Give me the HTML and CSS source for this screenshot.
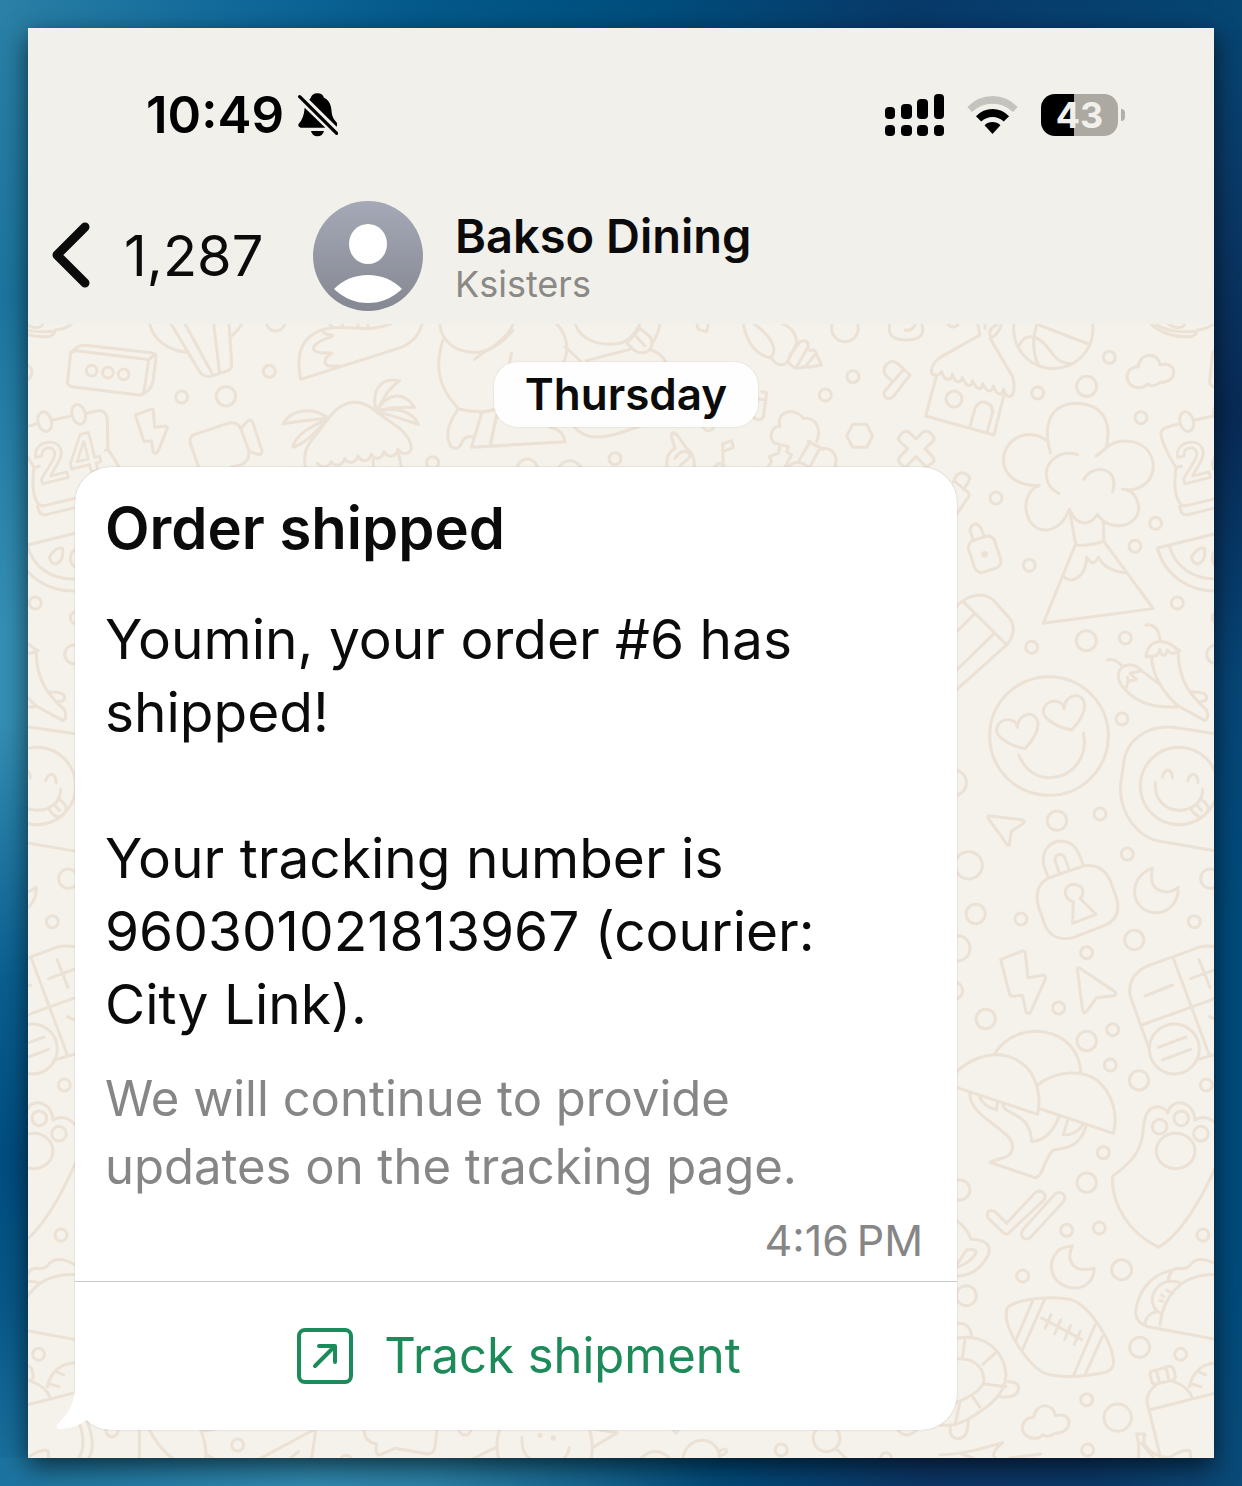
FILE: index.html
```html
<!DOCTYPE html>
<html lang="en">
<head>
  <meta charset="UTF-8">
  <meta name="viewport" content="width=device-width, initial-scale=1.0">
  <title>Bakso Dining</title>
  <link rel="stylesheet" href="styles.css">
</head>
<body>
  <div class="phone">
    <header class="header">
      <div class="status-bar">
        <div class="status-left">
          <span class="clock">10:49</span>
          <svg class="bell" viewBox="0 0 120 132" aria-hidden="true">
            <path d="M38 15Q42 1 58 1Q74 1 78 14C95 22 100 38 101 58Q102 75 117 90Q118 98 116 101L34 20Z"/>
            <path d="M20 44L82 104H8Q0 102 1 94Q18 76 20 44Z"/>
            <path d="M39 114H78Q74 130 58 130Q43 130 39 114Z"/>
            <path d="M5 11L116 121" fill="none" stroke="#000" stroke-width="10" stroke-linecap="round"/>
          </svg>
        </div>
        <div class="status-right">
          <svg class="signal" viewBox="0 0 59 42" aria-hidden="true">
            <rect x="0" y="13" width="10" height="12" rx="4"/>
            <rect x="16" y="10" width="11" height="15" rx="4"/>
            <rect x="32" y="5" width="11" height="20" rx="4"/>
            <rect x="49" y="0" width="10" height="25" rx="4"/>
            <rect x="0" y="31" width="10" height="11" rx="4"/>
            <rect x="16" y="31" width="11" height="11" rx="4"/>
            <rect x="32" y="31" width="11" height="11" rx="4"/>
            <rect x="49" y="31" width="10" height="11" rx="4"/>
          </svg>
          <svg class="wifi" viewBox="0 0 154 114" aria-hidden="true">
            <path d="M1 33Q34 0 77 0T153 33L139 48Q112 23 77 23T15 48Z" fill="#c5c3be"/>
            <path d="M27 61Q48 39 77 39T127 61L111 77Q96 63 77 63T43 77Z"/>
            <path d="M53 88Q63 78 77 78T101 88L77 114Z"/>
          </svg>
          <div class="battery"><span class="battery-level">43</span></div>
        </div>
      </div>
      <div class="nav">
        <button class="back" type="button" aria-label="Back">
          <svg class="chevron" viewBox="0 0 38 64" aria-hidden="true"><path d="M33 3L5 31L33 59"/></svg>
          <span class="unread">1,287</span>
        </button>
        <svg class="avatar" viewBox="0 0 110 110" aria-hidden="true">
          <defs>
            <linearGradient id="avatar-fill" x1="0" y1="0" x2="0" y2="1">
              <stop offset="0" stop-color="#a5a9b7"/>
              <stop offset="1" stop-color="#858892"/>
            </linearGradient>
          </defs>
          <circle cx="55" cy="55" r="55" fill="url(#avatar-fill)"/>
          <ellipse cx="55" cy="43" rx="19" ry="20" fill="#fff"/>
          <path d="M21 88Q35 74 55 74T89 88Q74 102 55 102T21 88Z" fill="#fff"/>
        </svg>
        <div class="contact">
          <h1 class="contact-name">Bakso Dining</h1>
          <p class="contact-sub">Ksisters</p>
        </div>
      </div>
    </header>

    <main class="chat">
      <svg class="wallpaper" viewBox="28 324 1186 1134" preserveAspectRatio="xMidYMid slice" aria-hidden="true">
        <defs>
          <g id="doodles">
            <!-- calendar, camera, huts -->
            <g transform="translate(28 320) scale(.3333)">
              <path d="M145 92L355 118Q362 120 361 128L348 212Q345 226 332 225L132 200Q118 197 119 185L127 105Q130 92 145 92Z"/>
              <path d="M128 97L150 80Q160 74 172 76L370 98Q384 100 384 112L375 185Q372 200 362 210L340 225M361 120L382 102"/>
              <circle cx="191" cy="152" r="16"/><circle cx="240" cy="158" r="16"/><circle cx="287" cy="163" r="16"/>
              <path d="M365 10C375 60 420 90 475 97M428 10L515 155Q525 170 545 170L600 152Q612 147 611 130L603 10M470 10L552 160M557 10L575 160M610 48Q625 38 642 12"/>
              <circle cx="461" cy="231" r="18"/><circle cx="594" cy="229" r="29"/><circle cx="724" cy="154" r="18"/><circle cx="743" cy="5" r="28"/>
              <path d="M818 178C800 90 830 40 900 25C980 15 1000 40 1088 12M818 178L1120 82C1160 65 1175 40 1182 12M885 35C895 50 920 40 912 50C880 60 850 75 858 90C870 105 900 95 912 100C890 110 885 130 900 138L935 138M912 20L905 12M945 22L942 12M990 24V12M1020 22V12"/>
              <path d="M178 280L210 272Q235 270 238 300L240 388L272 438M75 300L128 288M26 312L-5 320Q-30 328 -27 345C-20 385 0 410 18 443L34 439M18 443C10 500 15 530 30 550Q38 560 50 557L140 535M28 560L35 578Q42 586 55 584L140 563M232 391L240 388"/>
              <ellipse cx="50" cy="305" rx="20" ry="30" transform="rotate(-15 50 305)"/>
              <ellipse cx="152" cy="283" rx="20" ry="30" transform="rotate(-15 152 283)"/>
              <text class="doodle-text" x="34" y="494" transform="rotate(-14 34 494)">24</text>
              <path d="M322 285L372 267Q376 266 376 272L380 322L412 318Q422 320 416 330L390 395Q382 406 376 396L370 362L348 365Z"/>
              <path d="M512 442L487 370Q482 350 500 343L600 310Q630 303 640 330L662 390Q668 420 640 434L610 442M642 322L660 302Q670 296 675 310L702 392Q703 406 690 403L668 395"/>
              <path d="M832 442C825 390 840 375 860 350L905 290C950 235 1000 235 1045 275L1115 325C1140 345 1150 370 1150 385C1145 405 1120 405 1110 388C1105 412 1080 415 1068 395C1062 418 1040 422 1030 402C1025 425 1000 430 990 408C985 430 960 434 950 415C945 436 922 442 910 425C900 445 880 445 868 430M1035 420L1037 440M1110 390L1120 440"/>
              <path d="M900 295C860 260 790 265 765 312C800 305 850 300 900 295C850 320 800 345 795 382C840 365 870 330 900 295M1045 275C1030 220 1050 170 1115 182C1080 205 1065 240 1045 275C1080 215 1130 215 1160 262C1120 262 1080 262 1045 275C1100 260 1150 270 1172 313C1130 300 1090 285 1045 275"/>
              <path d="M1235 10C1240 70 1290 100 1350 97C1400 90 1430 60 1455 30M1340 118L1370 95M1245 60C1220 140 1230 200 1290 265C1330 280 1390 275 1420 265M1290 268C1260 310 1250 350 1270 380C1290 395 1300 375 1305 360Q1318 345 1338 352M1362 278L1330 382L1440 376M1405 285L1388 375"/>
              <circle cx="1214" cy="428" r="18"/>
            </g>
            <!-- shell, hand, notes, popcorn -->
            <g transform="translate(480 320) scale(.3333)">
              <path d="M0 102C50 80 90 40 100 10M228 10C260 40 270 90 250 128M255 80L300 122M285 10C300 60 360 80 420 70C440 65 470 40 480 10M540 10C535 40 525 60 515 70M440 70L480 25L510 50Q525 75 505 92Q485 105 465 92ZM465 45L495 78M320 122L450 88M515 90C540 100 550 110 558 128M95 100L88 128M0 280L40 268M50 290L30 375M0 380L255 365Q250 330 210 322M280 318C320 365 370 360 480 318"/>
              <path d="M845 215L860 218L850 290M820 235L858 240M820 290C830 305 850 300 852 285M650 10L655 28L680 35L685 12"/>
              <circle cx="685" cy="315" r="17"/><circle cx="405" cy="416" r="18"/><circle cx="142" cy="447" r="30"/><circle cx="270" cy="458" r="36"/><circle cx="1119" cy="170" r="18"/><circle cx="1036" cy="225" r="18"/><circle cx="1095" cy="25" r="40"/>
              <path d="M790 10C800 70 830 105 870 113C890 100 890 60 820 10M875 115C890 140 915 140 925 120L950 70C950 40 930 20 905 10M925 125C940 150 965 145 970 140M930 105L960 65Q985 55 985 80L950 140M990 92Q1005 85 1008 100L975 142M1008 100L1025 135L985 142"/>
              <path d="M620 385L595 350Q585 335 575 340Q570 342 585 385C560 400 558 420 562 445M620 385C640 400 645 420 643 445M585 415Q600 390 620 395Q640 405 620 420Q600 435 600 440M730 440L728 372L755 362L760 382L728 395M705 440Q715 425 732 435"/>
              <path d="M885 370C860 350 880 315 900 320C885 280 940 255 970 295C1010 290 1025 330 1010 365M885 370L925 380L920 395L935 405L915 440M900 378L895 400L868 410L875 425L865 440M990 365L958 420M1020 385L990 440M1030 385C1060 385 1075 410 1065 440M985 365L1030 388M925 440Q950 415 985 440"/>
            </g>
            <!-- volcano, cloud, locks -->
            <g transform="translate(840 320) scale(.3333)">
              <circle cx="593" cy="219" r="18"/><circle cx="740" cy="199" r="30"/><circle cx="808" cy="112" r="18"/><circle cx="903" cy="293" r="18"/><circle cx="468" cy="534" r="18"/><circle cx="568" cy="736" r="18"/><circle cx="947" cy="610" r="18"/><circle cx="885" cy="679" r="18"/><circle cx="1012" cy="849" r="18"/><circle cx="739" cy="962" r="30"/><circle cx="575" cy="982" r="18"/><circle cx="856" cy="954" r="18"/><circle cx="1128" cy="1003" r="28"/><circle cx="342" cy="237" r="24"/><circle cx="339" cy="3" r="18"/><circle cx="1135" cy="893" r="18"/>
              <path d="M932 10C960 42 1010 52 1050 50C1065 48 1070 40 1072 30C1095 28 1110 22 1122 10M950 14C980 35 1030 38 1062 34M985 10C1000 28 1030 25 1035 12"/>
              <path d="M150 10C140 45 160 60 200 60C245 60 255 40 245 10M195 30Q215 35 225 15"/>
              <path d="M210 165L160 230Q145 242 135 230Q128 220 137 210L190 150M155 182L135 163Q125 140 150 125Q165 122 178 135L210 165"/>
              <path d="M413 10L420 45L300 112Q270 135 275 160Q290 175 305 155Q312 180 325 178Q335 178 337 162Q345 188 357 185Q365 185 367 172Q378 200 390 196Q397 194 397 182Q410 208 420 206Q428 203 428 190Q440 215 450 213Q458 210 460 198Q470 225 482 222Q490 218 490 208Q500 235 515 228Q528 210 518 170L450 55Q475 45 485 12M290 165L257 288L462 345L492 225M390 320L405 265Q425 230 455 260L458 275L442 335M435 12V25M450 45Q445 25 470 15"/>
              <circle cx="640" cy="27" r="119"/>
              <path d="M590 12L745 72M590 14Q570 80 595 135M538 75Q560 35 600 60C640 90 640 130 690 130"/>
              <path id="doodle-cloud" d="M895 203C850 200 850 140 895 140C900 95 955 95 960 135C1015 120 1015 190 960 187C945 200 930 198 922 192C915 200 905 204 895 203Z"/>
              <path d="M38 313L80 313L98 348L80 382L38 382L20 348Z"/>
              <path d="M228 357L250 335Q260 330 270 338L280 348Q286 357 278 365L255 386L278 410Q286 420 278 428L262 438M228 357L205 335Q195 330 186 340L178 350Q172 358 180 365L203 386L180 410Q172 420 180 430L190 438M228 410L200 438M228 410L256 438"/>
              <path d="M632 400C610 330 620 250 712 250C800 255 815 320 798 385L768 408M798 385C830 350 930 350 940 435C940 500 880 515 848 508C890 510 905 560 890 590C860 630 800 625 772 583C750 620 710 620 688 568C660 640 600 645 570 605C545 560 560 510 598 496C540 500 490 470 490 418C495 350 570 320 625 365M713 404C660 385 600 430 625 490Q635 510 657 520M732 478C760 430 840 440 818 515"/>
              <path d="M688 568L707 672L610 910L940 866L792 665L790 605M707 674Q750 680 792 663M668 765C690 800 740 770 740 710Q758 745 775 712C790 740 820 755 855 758"/>
              <path d="M340 485L350 465Q370 450 388 470Q392 480 370 508M345 485L382 515Q390 522 385 532L345 590"/>
              <rect x="393" y="653" width="82" height="100" rx="22" transform="rotate(-18 434 703)"/>
              <path d="M400 660L390 632Q392 612 410 612Q422 615 432 648"/>
              <circle class="dot" cx="434" cy="703" r="10"/>
              <path d="M340 870C380 820 430 815 460 840L505 890C530 920 520 950 500 975L340 1118M370 845L500 975M340 945L403 882M340 1060L463 940"/>
              <path d="M1132 640L952 684C975 770 1050 815 1132 813M988 678C1005 740 1060 780 1132 777M1055 710Q1075 680 1093 685Q1100 720 1075 732Q1055 730 1055 710Z"/>
              <ellipse cx="1135" cy="715" rx="18" ry="26"/>
            </g>
            <!-- smileys, padlock, moon -->
            <g transform="translate(940 640) scale(.3333)">
              <circle cx="327" cy="288" r="178"/><circle cx="717" cy="438" r="116"/><circle cx="351" cy="542" r="29"/><circle cx="480" cy="522" r="18"/><circle cx="546" cy="237" r="18"/><circle cx="562" cy="642" r="18"/><circle cx="86" cy="676" r="41"/><circle cx="107" cy="822" r="29"/><circle cx="243" cy="837" r="18"/><circle cx="583" cy="900" r="29"/><circle cx="763" cy="845" r="18"/><circle cx="811" cy="716" r="29"/><circle cx="40" cy="428" r="39"/><circle cx="440" cy="938" r="18"/><circle cx="52" cy="925" r="38"/>
              <path d="M255 326C200 315 160 285 172 260C185 230 230 235 232 262C235 215 290 210 294 250C295 280 275 305 255 326Z"/>
              <path d="M395 270C340 259 300 229 312 204C325 174 370 179 372 206C375 159 430 154 434 194C435 224 415 249 395 270Z"/>
              <path d="M236 345C260 400 300 413 330 413C400 410 445 350 430 280"/>
              <path d="M667 412Q672 390 685 390Q697 395 697 414M743 422Q750 403 762 403Q775 408 774 428M646 427C640 540 790 530 788 448M752 505Q765 530 785 532Q805 520 805 500Q795 485 780 475M768 492L785 512"/>
              <path d="M840 283L700 262C610 255 555 310 550 375L541 440C540 530 600 590 650 602L840 635"/>
              <path d="M145 527L250 540Q255 545 250 550L214 574L208 615Q204 618 200 612L143 533Z"/>
              <path d="M325 714L310 672C305 620 340 603 365 603C395 605 410 625 416 640L430 676M358 700L345 660Q345 643 362 643Q372 645 376 657L388 692M325 714L430 678C480 670 500 700 510 720L530 775C545 830 510 850 490 858L400 893C350 905 325 880 315 855L297 805C280 750 305 725 325 714ZM400 785C370 780 365 735 402 733C440 738 430 770 420 775L468 823L398 850Z"/>
              <path d="M637 685C640 690 615 750 680 756Q700 755 714 742C718 780 690 820 645 818C570 815 560 710 637 685Z"/>
              <path d="M503 60Q525 52 548 80C535 90 525 120 555 148Q570 120 562 112M548 80Q580 65 605 92L570 100L590 118L562 125M555 148C590 190 650 205 710 200M605 92L655 130M618 50C620 20 640 3 665 5C695 5 700 25 720 32L700 40Q690 42 682 30Q678 50 668 45Q660 40 660 28Q655 50 635 48ZM635 50C635 110 680 170 715 198L795 242Q808 235 800 210C775 185 715 140 715 40M752 155Q800 155 800 172Q800 185 780 185M618 -45Q655 -50 660 0"/>
            </g>
            <!-- bolt, mushrooms, calculator -->
            <g transform="translate(940 930) scale(.3333)">
              <circle cx="356" cy="234" r="18"/><circle cx="518" cy="299" r="18"/><circle cx="440" cy="333" r="29"/><circle cx="511" cy="405" r="18"/><circle cx="137" cy="267" r="29"/><circle cx="597" cy="451" r="29"/><circle cx="799" cy="465" r="18"/><circle cx="490" cy="668" r="18"/><circle cx="440" cy="758" r="29"/><circle cx="60" cy="780" r="30"/><circle cx="703" cy="357" r="75"/><circle cx="659" cy="590" r="22"/><circle cx="724" cy="565" r="22"/><circle cx="783" cy="611" r="22"/><circle cx="42" cy="182" r="26"/>
              <ellipse cx="707" cy="663" rx="58" ry="53"/>
              <path d="M182 88L248 63Q255 62 256 70L264 143L310 135Q318 137 316 147L272 246Q264 256 258 246L247 196L218 199Q210 198 208 190Z"/>
              <path d="M412 118Q412 110 422 116L525 185Q530 195 520 197L470 203L438 246Q430 252 428 240Z"/>
              <path d="M832 50C790 45 780 50 760 58L625 107C580 125 560 165 573 205L628 357M605 285L832 203M700 85L808 375M768 390L832 372M615 198L698 165M752 146L832 117M777 88L810 172M808 260L832 270M655 352L738 321M667 390L752 358"/>
              <path d="M163 373C230 260 420 290 422 430M40 435C100 370 190 355 245 400C290 430 305 500 293 553L40 469M293 465C350 420 430 420 470 450C520 490 535 560 520 610L302 537M90 490C85 560 220 600 218 650C215 690 180 680 150 697L285 743C310 740 310 690 340 660C380 655 420 650 438 590M118 500Q130 530 170 540L172 518M188 520C190 560 270 540 275 635Q330 630 357 560M383 570L370 615Q410 615 430 582"/>
              <path d="M832 700C770 840 710 920 656 952C570 910 515 830 517 740C570 700 600 670 608 615C612 550 625 530 655 530Q680 535 683 550C690 520 715 515 730 520Q762 530 765 570C790 555 815 565 832 585"/>
            </g>
            <!-- football, taco, bottle, turtle -->
            <g transform="translate(940 1180) scale(.3333)">
              <circle cx="380" cy="151" r="18"/><circle cx="478" cy="144" r="18"/><circle cx="248" cy="288" r="18"/><circle cx="545" cy="269" r="30"/><circle cx="599" cy="502" r="30"/><circle cx="722" cy="523" r="18"/><circle cx="440" cy="659" r="18"/><circle cx="533" cy="713" r="41"/><circle cx="443" cy="810" r="18"/><circle cx="789" cy="165" r="18"/><circle cx="79" cy="347" r="30"/>
              <path d="M200 130L285 38Q300 28 312 40Q320 50 310 62L205 160Q198 166 190 158L145 115Q138 100 148 93Q160 88 168 98ZM345 42Q360 32 372 44Q378 55 370 65L272 172Q260 182 248 172Q240 160 250 148Z"/>
              <path d="M397 198C340 200 325 250 340 285C365 340 460 340 463 265Q400 280 390 235Q388 215 397 198Z"/>
              <path d="M205 380C250 350 350 350 390 358C450 375 520 490 521 550Q520 572 490 578C430 592 350 595 310 578C260 550 195 450 199 400Q200 385 205 380ZM280 358L228 480M315 356L246 512M465 435L400 588M487 470L435 585M305 414L425 478M333 404L315 445M362 420L344 462M392 437L374 478M421 453L403 493"/>
              <path d="M40 115Q80 140 93 178Q160 180 145 225C120 270 90 290 40 288M45 262L80 210Q110 205 108 220Q90 250 50 262"/>
              <path d="M832 255Q780 225 755 250Q740 270 715 265Q690 265 685 300M690 272C620 290 590 350 587 400Q590 430 625 440L832 479M660 435C670 350 720 280 832 284M720 308C660 290 630 340 638 370Q645 395 665 400M615 430Q620 400 650 395M665 345L672 350M680 330L688 335M660 362L668 364"/>
              <path d="M632 575L690 558Q700 560 702 570L706 590Q705 600 695 602L645 613Q635 610 634 600L630 585ZM650 572L658 608M678 565L688 602M648 615C620 640 615 660 627 690L662 834M700 604Q745 620 756 652M627 690L832 638M748 620C760 570 790 550 832 548M775 575L797 585M755 612L783 620M590 762L615 762C600 800 640 832 690 832M590 762Q600 800 595 834M605 790Q625 815 640 832M690 832Q730 805 750 812L752 834"/>
              <path d="M75 478L67 535M40 477C130 455 190 510 198 580C200 640 150 680 80 720Q40 740 0 735M165 520L128 553M132 612L198 620M95 645L120 682M60 665L45 735M40 538C100 530 130 560 132 600C130 630 90 650 40 672M40 432Q90 420 95 470M205 605Q240 605 235 630Q230 655 180 650M85 722L82 750Q75 778 50 776Q25 770 32 738M0 825C80 820 110 810 188 788Q150 820 165 834M65 822L100 834M210 834L302 822"/>
              <use href="#doodle-cloud" x="-614" y="572"/>
            </g>
          </g>
        </defs>
        <use href="#doodles"/>
        <use href="#doodles" x="-1142"/>
        <use href="#doodles" x="1142"/>
        <!-- strip under the message -->
        <g transform="translate(0 1220) scale(.3333)">
          <path d="M418 620V716M445 625Q480 690 520 716M600 625Q620 670 618 716M607 634L660 625M940 630L780 716M940 630Q948 632 946 640L935 716M640 716L620 705M870 716L895 695M1093 625Q1090 665 1130 672L1128 690Q1130 708 1142 704L1185 685L1285 702Q1302 700 1305 680L1312 625M240 615Q260 680 235 716M262 605Q290 680 265 716"/>
          <circle cx="336" cy="632" r="18"/><circle cx="713" cy="675" r="18"/><circle cx="1038" cy="722" r="16"/><circle cx="1395" cy="627" r="18"/><circle cx="2344" cy="690" r="18"/><circle cx="2480" cy="655" r="40"/><circle cx="2658" cy="714" r="16"/>
          <path d="M1420 716L1488 682M1500 625Q1484 670 1496 716M1566 652Q1564 700 1590 716M1708 682Q1706 704 1690 716M1768 625Q1782 670 1774 716M1780 682L1852 638L1766 625M1922 716Q1966 672 2010 716M2048 716C2060 642 2155 642 2160 716M2162 692Q2182 680 2180 696Q2172 708 2160 704M2508 686L2540 716M2018 625Q2028 652 2036 625M2690 625Q2718 665 2755 625"/>
          <circle class="dot" cx="1620" cy="646" r="8"/><circle class="dot" cx="1660" cy="654" r="8"/>
        </g>
      </svg>

      <time class="day">Thursday</time>

      <article class="message">
        <div class="message-body">
          <h2 class="message-title">Order shipped</h2>
          <p class="message-text">Youmin, your order #6 has shipped!</p>
          <p class="message-text">Your tracking number is 960301021813967 (courier: City Link).</p>
          <p class="message-note">We will continue to provide updates on the tracking page.</p>
          <time class="message-time">4:16&#8239;PM</time>
        </div>
        <a class="track" href="#">
          <svg class="track-icon" viewBox="0 0 56 56" aria-hidden="true">
            <rect x="2" y="2" width="52" height="52" rx="6"/>
            <path d="M18 38L37 19M22 18H38V34"/>
          </svg>
          Track shipment
        </a>
        <svg class="tail" viewBox="0 0 60 60" aria-hidden="true">
          <path d="M19 0V15C19 36 11 44 1 55Q0 59 4 59Q22 58 31 49Q38 58 52 59V0Z"/>
        </svg>
      </article>
    </main>
  </div>
</body>
</html>
```
FILE: styles.css
```css
* {
  box-sizing: border-box;
}
body {
  margin: 0;
  padding: 28px;
  min-height: 100vh;
  font-family: Inter, "Open Sans", sans-serif;
  color: #0b0b0b;
  background:
    linear-gradient(to right, #2a80a6, #10689a 20%, #045a8b 34%, #00507f 50%, #083a6a 73%, #064673) top / 100% 28px no-repeat,
    linear-gradient(to right, #1c739f, #2f88ae 25%, #2a80a6 35%, #14648e 48%, #004a7a 58%, #0c3566 75%, #0a3868 88%, #0a4a78) bottom / 100% 28px no-repeat,
    linear-gradient(#2a80a6, #1c759f 20%, #3590b5 43%, #3590b5 48%, #0a5f90 66%, #004d80 78%, #085888 88%, #1c739f) left / 28px 100% no-repeat,
    linear-gradient(#064673, #0a3a68 12%, #082a55 28%, #074576 46%, #004b7c 62%, #004b7c 85%, #0a4a78) right / 28px 100% no-repeat,
    #004d80;
}
h1, h2, p {
  margin: 0;
}
.phone {
  background-color: #f2f0eb;
  box-shadow: 0 8px 24px rgba(0, 0, 0, 0.65);
}

/* status bar and contact */
.header {
  padding-bottom: 13px;
}
.status-bar {
  display: flex;
  justify-content: space-between;
  align-items: center;
  height: 173px;
  padding: 0 89px 0 118px;
}
.status-left, .status-right {
  display: flex;
  align-items: center;
}
.status-left {
  gap: 14px;
}
.status-right {
  gap: 23px;
}
.clock {
  font-size: 51px;
  font-weight: 600;
  color: #000;
}
.bell {
  width: 40px;
  height: 44px;
}
.signal {
  width: 59px;
  height: 42px;
}
.wifi {
  width: 51px;
  height: 38px;
}
.battery {
  display: flex;
  align-items: center;
  gap: 3px;
}
.battery::after {
  content: "";
  width: 4px;
  height: 12px;
  border-radius: 0 6px 6px 0;
  background-color: #b3b0aa;
}
.battery-level {
  width: 77px;
  border-radius: 14px;
  background: linear-gradient(to right, #000 43%, #aca9a3 43%);
  color: #f2f0eb;
  font-size: 36px;
  font-weight: 700;
  line-height: 42px;
  text-align: center;
}
.nav {
  display: flex;
  align-items: center;
  padding-left: 24px;
}
.back {
  display: flex;
  align-items: center;
  gap: 34px;
  width: 261px;
  padding: 0;
  border: none;
  background: none;
  color: inherit;
  font: inherit;
  cursor: pointer;
}
.chevron {
  width: 38px;
  height: 64px;
  overflow: visible;
  fill: none;
  stroke: #0b0b0b;
  stroke-width: 9;
  stroke-linecap: round;
  stroke-linejoin: round;
}
.unread {
  font-size: 56px;
}
.avatar {
  width: 110px;
  height: 110px;
  margin-right: 32px;
}
.contact-name {
  font-size: 47px;
  font-weight: 600;
  line-height: 56px;
}
.contact-sub {
  font-size: 36px;
  line-height: 40px;
  color: #8a8986;
}

/* chat */
.chat {
  position: relative;
  display: flex;
  flex-direction: column;
  padding: 38px 257px 28px 47px;
  background-color: #f5f2eb;
}
.wallpaper {
  position: absolute;
  inset: 0;
  width: 100%;
  height: 100%;
  fill: none;
  stroke: #ebe1d5;
  stroke-width: 9;
  stroke-linecap: round;
  stroke-linejoin: round;
}
.doodle-text {
  font-size: 160px;
  font-weight: 600;
  stroke-width: 8;
}
.dot {
  fill: #ebe1d5;
  stroke: none;
}
.day {
  position: relative;
  align-self: center;
  margin: 0 -220px 40px 0;
  padding: 0 31px;
  border-radius: 24px;
  background-color: rgba(255, 255, 255, 0.92);
  box-shadow: 0 0 2px rgba(0, 0, 0, 0.15);
  font-size: 44px;
  font-weight: 600;
  line-height: 65px;
}
.message {
  position: relative;
  border-radius: 36px;
  background-color: #fff;
  box-shadow: 0 0 2px rgba(0, 0, 0, 0.2);
}
.message-body {
  display: flex;
  flex-direction: column;
  padding: 25px 34px 16px 30px;
  border-bottom: 1px solid #c9c9c9;
}
.message-title {
  margin-bottom: 38px;
  font-size: 58px;
  font-weight: 600;
  line-height: 73px;
}
.message-text {
  font-size: 55px;
  line-height: 73px;
}
.message-text + .message-text {
  margin-top: 73px;
}
.message-note {
  margin-top: 24px;
  font-size: 49px;
  line-height: 68px;
  color: #868686;
}
.message-time {
  align-self: flex-end;
  margin-top: 14px;
  font-size: 43px;
  line-height: 50px;
  color: #868686;
}
.track {
  display: flex;
  justify-content: center;
  align-items: center;
  gap: 31px;
  padding-left: 6px;
  font-size: 49px;
  line-height: 148px;
  color: #1d8b59;
  text-decoration: none;
}
.track-icon {
  width: 56px;
  height: 56px;
  fill: none;
  stroke: #1d8b59;
  stroke-width: 4;
  stroke-linecap: round;
  stroke-linejoin: round;
}
.tail {
  position: absolute;
  left: -19px;
  bottom: 0;
  width: 60px;
  height: 60px;
  fill: #fff;
}
```
